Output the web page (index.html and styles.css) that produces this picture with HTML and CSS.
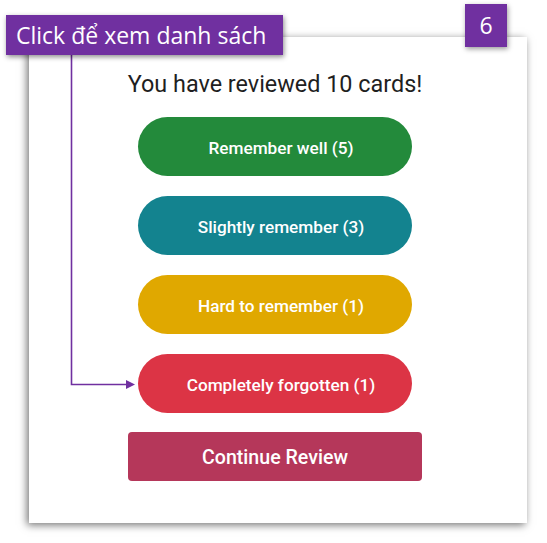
FILE: index.html
```html
<!DOCTYPE html>
<html lang="en">
<head>
<meta charset="utf-8">
<title>Review summary</title>
<link rel="stylesheet" href="styles.css">
</head>
<body>
<div class="stage">
  <div class="card">
    <h1 class="title">You have reviewed 10 cards!</h1>
    <div class="choices">
      <button class="pill pill-green">Remember well (5)</button>
      <button class="pill pill-teal">Slightly remember (3)</button>
      <button class="pill pill-yellow">Hard to remember (1)</button>
      <button class="pill pill-red">Completely forgotten (1)</button>
    </div>
    <button class="continue">Continue Review</button>
  </div>

  <svg class="connector" width="547" height="543" viewBox="0 0 547 543">
    <path d="M71.5 55 V384.5 H127" fill="none" stroke="#7030a0" stroke-width="1.6"/>
    <path d="M135 384.5 L126 380 L126 389 Z" fill="#7030a0"/>
  </svg>
  <div class="callout">Click để xem danh sách</div>
  <div class="badge">6</div>
</div>
</body>
</html>
```

FILE: styles.css
```css
html, body {
  margin: 0;
  padding: 0;
  background: #ffffff;
}

.stage {
  position: relative;
  width: 547px;
  height: 543px;
  box-sizing: border-box;
  padding: 37px 0 0 29px;
  overflow: hidden;
}

.card {
  width: 498px;
  height: 486px;
  box-sizing: border-box;
  background: #ffffff;
  box-shadow: -2px 2px 8px rgba(0, 0, 0, 0.55);
  padding: 34px 6px 0 0;
  display: flex;
  flex-direction: column;
  align-items: center;
  font-family: Roboto, "Liberation Sans", sans-serif;
}

.title {
  margin: 0;
  font-size: 23.4px;
  font-weight: 400;
  line-height: 27px;
  color: #1f1f1f;
}

.choices {
  margin-top: 19px;
  display: flex;
  flex-direction: column;
  gap: 20px;
}

.pill {
  width: 274px;
  height: 59px;
  border: none;
  border-radius: 30px;
  padding: 2px 0 0 12px;
  color: #ffffff;
  font-family: Roboto, "Liberation Sans", sans-serif;
  font-size: 17.2px;
  font-weight: 500;
  cursor: pointer;
}

.pill-green { background: #238a3b; }
.pill-teal { background: #13838f; }
.pill-yellow { background: #e0a800; }
.pill-red { background: #dc3445; }

.continue {
  margin-top: 19px;
  width: 294px;
  height: 49px;
  border: none;
  border-radius: 4px;
  background: #b5375a;
  color: #ffffff;
  font-family: Roboto, "Liberation Sans", sans-serif;
  font-size: 19.6px;
  font-weight: 500;
  padding: 2px 0 0 0;
  cursor: pointer;
}

.connector {
  position: absolute;
  left: 0;
  top: 0;
  pointer-events: none;
}

.callout {
  position: absolute;
  left: 6px;
  top: 15px;
  width: 277px;
  height: 40px;
  box-sizing: border-box;
  padding-left: 10px;
  background: #7030a0;
  color: #ffffff;
  font-family: "Open Sans", "Noto Sans", sans-serif;
  font-size: 23px;
  line-height: 40px;
  box-shadow: 1px 2px 5px rgba(0, 0, 0, 0.45);
  white-space: nowrap;
}

.badge {
  position: absolute;
  left: 465px;
  top: 4px;
  width: 42px;
  height: 43px;
  background: #7030a0;
  color: #ffffff;
  font-family: "Open Sans", "Noto Sans", sans-serif;
  font-size: 23px;
  line-height: 42px;
  text-align: center;
  box-shadow: 1px 2px 5px rgba(0, 0, 0, 0.4);
}
```
